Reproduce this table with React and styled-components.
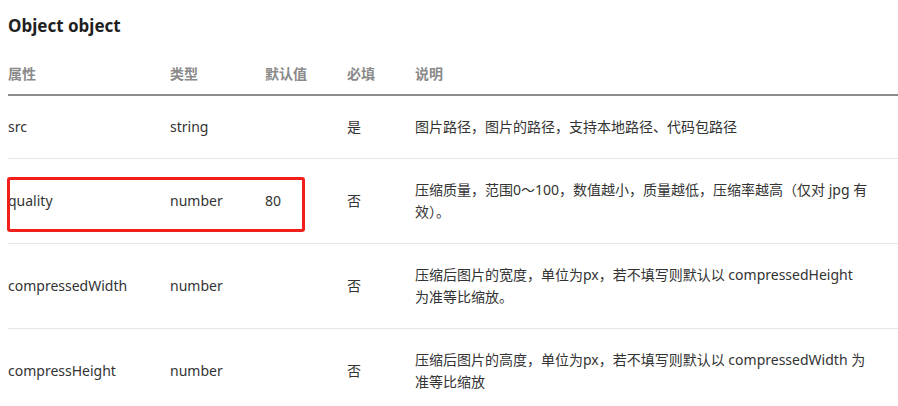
import React from "react";
import styled, { createGlobalStyle } from "styled-components";

const GlobalStyle = createGlobalStyle`
  html, body {
    margin: 0;
    padding: 0;
    background: #ffffff;
  }
  body {
    font-family: "Noto Sans", "Noto Sans CJK SC", sans-serif;
    color: #333333;
    overflow: hidden;
  }
`;

const Page = styled.div`
  width: 898px;
  padding: 14px 0 0 8px;
  box-sizing: border-box;
`;

const Title = styled.h3`
  margin: 0 0 15px;
  font-size: 17px;
  line-height: 24px;
  font-weight: 700;
  color: #1f1f1f;
`;

const Table = styled.div`
  width: 890px;
  display: flex;
  flex-direction: column;
`;

const Row = styled.div`
  position: relative;
  display: grid;
  grid-template-columns: 162px 95px 82px 68px 1fr;
  align-items: center;
  border-bottom: ${(p) => (p.$head ? "2px solid #8c8c8c" : "1px solid #e6e6e6")};
  padding: ${(p) => (p.$head ? "10px 0 9px" : "20px 0 19px")};
`;

const Cell = styled.div`
  font-size: 14px;
  line-height: ${(p) => (p.$head ? "22px" : "22.5px")};
  color: ${(p) => (p.$head ? "#8a8a8a" : "#333333")};
  font-weight: ${(p) => (p.$head ? 700 : 400)};
  padding-right: ${(p) => (p.$desc ? "27px" : "0")};
  white-space: ${(p) => (p.$desc ? "pre-line" : "normal")};
`;

const Highlight = styled.div`
  position: absolute;
  left: -1px;
  top: 18px;
  width: 298px;
  height: 55px;
  box-sizing: border-box;
  border: 3px solid #f21e1a;
  border-radius: 3px;
  pointer-events: none;
`;

const rows = [
  {
    name: "src",
    type: "string",
    def: "",
    req: "是",
    desc: "图片路径，图片的路径，支持本地路径、代码包路径",
  },
  {
    name: "quality",
    type: "number",
    def: "80",
    req: "否",
    desc: "压缩质量，范围0～100，数值越小，质量越低，压缩率越高（仅对 jpg 有效）。",
    marked: true,
  },
  {
    name: "compressedWidth",
    type: "number",
    def: "",
    req: "否",
    desc: "压缩后图片的宽度，单位为px，若不填写则默认以 compressedHeight\n为准等比缩放。",
  },
  {
    name: "compressHeight",
    type: "number",
    def: "",
    req: "否",
    desc: "压缩后图片的高度，单位为px，若不填写则默认以 compressedWidth 为准等比缩放",
  },
];

export default function App() {
  return (
    <>
      <GlobalStyle />
      <Page>
        <Title>Object object</Title>
        <Table>
          <Row $head>
            <Cell $head>属性</Cell>
            <Cell $head>类型</Cell>
            <Cell $head>默认值</Cell>
            <Cell $head>必填</Cell>
            <Cell $head>说明</Cell>
          </Row>
          {rows.map((r) => (
            <Row key={r.name}>
              <Cell>{r.name}</Cell>
              <Cell>{r.type}</Cell>
              <Cell>{r.def}</Cell>
              <Cell>{r.req}</Cell>
              <Cell $desc>{r.desc}</Cell>
              {r.marked && <Highlight />}
            </Row>
          ))}
        </Table>
      </Page>
    </>
  );
}
